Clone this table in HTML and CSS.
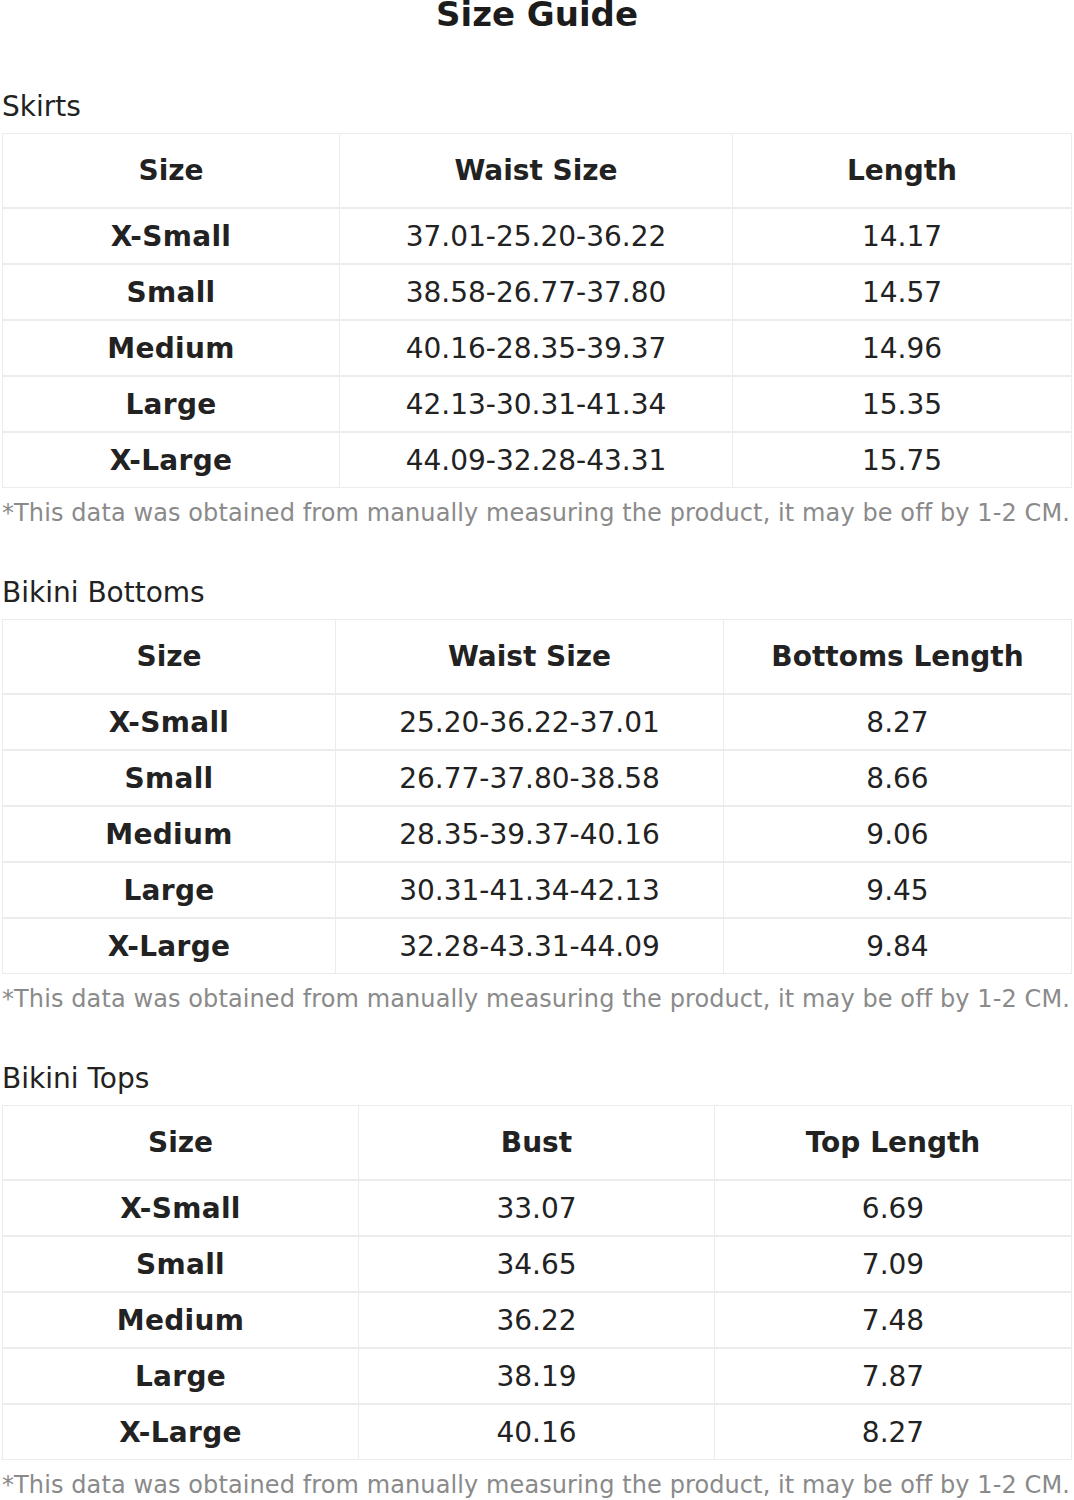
FILE: index.html
```html
<!DOCTYPE html>
<html>
<head>
<meta charset="utf-8">
<link rel="stylesheet" href="styles.css">
</head>
<body>
<div class="page">
  <h1 class="title">Size Guide</h1>

  <section class="section">
    <h2 class="section-title">Skirts</h2>
    <table class="guide guide-skirts">
      <colgroup><col class="c1"><col class="c2"><col class="c3"></colgroup>
      <thead><tr><th>Size</th><th>Waist Size</th><th>Length</th></tr></thead>
      <tbody>
        <tr><td class="size">X-Small</td><td>37.01-25.20-36.22</td><td>14.17</td></tr>
        <tr><td class="size">Small</td><td>38.58-26.77-37.80</td><td>14.57</td></tr>
        <tr><td class="size">Medium</td><td>40.16-28.35-39.37</td><td>14.96</td></tr>
        <tr><td class="size">Large</td><td>42.13-30.31-41.34</td><td>15.35</td></tr>
        <tr><td class="size">X-Large</td><td>44.09-32.28-43.31</td><td>15.75</td></tr>
      </tbody>
    </table>
    <p class="note">*This data was obtained from manually measuring the product, it may be off by 1-2 CM.</p>
  </section>

  <section class="section">
    <h2 class="section-title">Bikini Bottoms</h2>
    <table class="guide guide-bottoms">
      <colgroup><col class="c1"><col class="c2"><col class="c3"></colgroup>
      <thead><tr><th>Size</th><th>Waist Size</th><th>Bottoms Length</th></tr></thead>
      <tbody>
        <tr><td class="size">X-Small</td><td>25.20-36.22-37.01</td><td>8.27</td></tr>
        <tr><td class="size">Small</td><td>26.77-37.80-38.58</td><td>8.66</td></tr>
        <tr><td class="size">Medium</td><td>28.35-39.37-40.16</td><td>9.06</td></tr>
        <tr><td class="size">Large</td><td>30.31-41.34-42.13</td><td>9.45</td></tr>
        <tr><td class="size">X-Large</td><td>32.28-43.31-44.09</td><td>9.84</td></tr>
      </tbody>
    </table>
    <p class="note">*This data was obtained from manually measuring the product, it may be off by 1-2 CM.</p>
  </section>

  <section class="section">
    <h2 class="section-title">Bikini Tops</h2>
    <table class="guide guide-tops">
      <colgroup><col class="c1"><col class="c2"><col class="c3"></colgroup>
      <thead><tr><th>Size</th><th>Bust</th><th>Top Length</th></tr></thead>
      <tbody>
        <tr><td class="size">X-Small</td><td>33.07</td><td>6.69</td></tr>
        <tr><td class="size">Small</td><td>34.65</td><td>7.09</td></tr>
        <tr><td class="size">Medium</td><td>36.22</td><td>7.48</td></tr>
        <tr><td class="size">Large</td><td>38.19</td><td>7.87</td></tr>
        <tr><td class="size">X-Large</td><td>40.16</td><td>8.27</td></tr>
      </tbody>
    </table>
    <p class="note">*This data was obtained from manually measuring the product, it may be off by 1-2 CM.</p>
  </section>
</div>
</body>
</html>
```

FILE: styles.css
```css
html, body {
  margin: 0;
  padding: 0;
  background: #fff;
}
body {
  font-family: "DejaVu Sans", Verdana, sans-serif;
  color: #222;
}
.page {
  padding: 0 2px;
  margin-top: -6px;
}
.title {
  margin: 0;
  text-align: center;
  font-size: 34px;
  font-weight: bold;
  line-height: 40px;
  color: #1c1c1c;
}
.section {
  display: flex;
  flex-direction: column;
}
.section:first-of-type { margin-top: 57px; }
.section + .section { margin-top: 50px; }
.section-title {
  margin: 0 0 10px;
  font-weight: normal;
  font-size: 28px;
  line-height: 32px;
  color: #222;
}
.guide {
  width: 100%;
  border-collapse: collapse;
  table-layout: fixed;
  border: 1px solid #ececec;
}
.guide th, .guide td {
  text-align: center;
  border: 1px solid #ececec;
  padding: 0;
  color: #222;
  font-size: 28px;
}
.guide th {
  height: 73px;
  font-weight: bold;
}
.guide td {
  height: 54px;
  border-top-width: 2px;
}
.guide td.size {
  font-weight: bold;
  letter-spacing: 0.3px;
}
.guide-skirts .c1 { width: 337px; }
.guide-skirts .c2 { width: 393px; }
.guide-skirts .c3 { width: 339px; }
.guide-bottoms .c1 { width: 333px; }
.guide-bottoms .c2 { width: 388px; }
.guide-bottoms .c3 { width: 348px; }
.guide-tops .c1 { width: 356px; }
.guide-tops .c2 { width: 356px; }
.guide-tops .c3 { width: 357px; }
.note {
  margin: 11px 0 0;
  font-size: 24px;
  letter-spacing: 0.1px;
  line-height: 28px;
  color: #8a8a8a;
  white-space: nowrap;
}
```
